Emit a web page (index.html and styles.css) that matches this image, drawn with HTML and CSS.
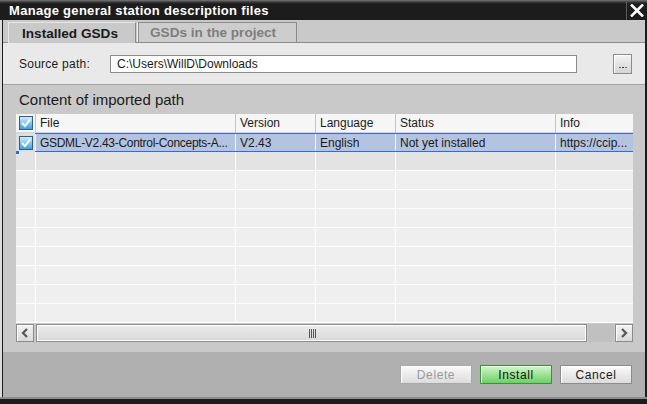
FILE: index.html
```html
<!DOCTYPE html>
<html lang="en">
<head>
<meta charset="utf-8">
<title>Manage general station description files</title>
<link rel="stylesheet" href="styles.css">
</head>
<body>
<div class="window">
  <div class="titlebar">
    <span class="title">Manage general station description files</span>
    <div class="close">
      <svg width="14" height="13" viewBox="0 0 14 13"><path d="M1 0.5 L13 12.5 M13 0.5 L1 12.5" stroke="#fff" stroke-width="2.6"/></svg>
    </div>
  </div>
  <div class="frame">
    <div class="tabs">
      <div class="tab active">Installed GSDs</div>
      <div class="tab inactive">GSDs in the project</div>
    </div>
    <div class="source">
      <span class="label">Source path:</span>
      <div class="input">C:\Users\WillD\Downloads</div>
      <div class="browse"><span class="dot d1"></span><span class="dot d2"></span><span class="dot d3"></span></div>
    </div>
    <div class="content">
      <div class="section-title">Content of imported path</div>
      <div class="grid">
        <div class="row header">
          <div class="cell chk"><svg class="cb" width="14" height="14" viewBox="0 0 14 14"><defs><linearGradient id="g1" x1="0" y1="0" x2="0" y2="1"><stop offset="0" stop-color="#d6f0ff"/><stop offset="1" stop-color="#3b9ddd"/></linearGradient></defs><rect x="0.5" y="0.5" width="13" height="13" fill="url(#g1)" stroke="#2f5f86"/><path d="M3 7 L6 10 L11 3.5" stroke="#fff" stroke-width="2" fill="none"/></svg></div>
          <div class="cell">File</div>
          <div class="cell">Version</div>
          <div class="cell">Language</div>
          <div class="cell">Status</div>
          <div class="cell">Info</div>
        </div>
        <div class="row selected">
          <div class="cell chk"><svg class="cb" width="14" height="14" viewBox="0 0 14 14"><defs><linearGradient id="g2" x1="0" y1="0" x2="0" y2="1"><stop offset="0" stop-color="#d6f0ff"/><stop offset="1" stop-color="#3b9ddd"/></linearGradient></defs><rect x="0.5" y="0.5" width="13" height="13" fill="url(#g2)" stroke="#2f5f86"/><path d="M3 7 L6 10 L11 3.5" stroke="#fff" stroke-width="2" fill="none"/></svg><span class="marker"></span></div>
          <div class="cell narrow">GSDML-V2.43-Control-Concepts-A...</div>
          <div class="cell">V2.43</div>
          <div class="cell">English</div>
          <div class="cell">Not yet installed</div>
          <div class="cell">https://ccip...</div>
        </div>
        <div class="row empty first"><div class="cell chk"></div><div class="cell"></div><div class="cell"></div><div class="cell"></div><div class="cell"></div><div class="cell"></div></div>
        <div class="row empty"><div class="cell chk"></div><div class="cell"></div><div class="cell"></div><div class="cell"></div><div class="cell"></div><div class="cell"></div></div>
        <div class="row empty"><div class="cell chk"></div><div class="cell"></div><div class="cell"></div><div class="cell"></div><div class="cell"></div><div class="cell"></div></div>
        <div class="row empty"><div class="cell chk"></div><div class="cell"></div><div class="cell"></div><div class="cell"></div><div class="cell"></div><div class="cell"></div></div>
        <div class="row empty"><div class="cell chk"></div><div class="cell"></div><div class="cell"></div><div class="cell"></div><div class="cell"></div><div class="cell"></div></div>
        <div class="row empty"><div class="cell chk"></div><div class="cell"></div><div class="cell"></div><div class="cell"></div><div class="cell"></div><div class="cell"></div></div>
        <div class="row empty"><div class="cell chk"></div><div class="cell"></div><div class="cell"></div><div class="cell"></div><div class="cell"></div><div class="cell"></div></div>
        <div class="row empty"><div class="cell chk"></div><div class="cell"></div><div class="cell"></div><div class="cell"></div><div class="cell"></div><div class="cell"></div></div>
        <div class="row empty"><div class="cell chk"></div><div class="cell"></div><div class="cell"></div><div class="cell"></div><div class="cell"></div><div class="cell"></div></div>
      </div>
      <div class="hscroll">
        <div class="sbtn"><svg width="8" height="10" viewBox="0 0 8 10"><path d="M6 1 L2 5 L6 9" stroke="#555" stroke-width="2.2" fill="none"/></svg></div>
        <div class="thumb"><svg width="8" height="9" viewBox="0 0 8 9"><path d="M0.5 0 V9 M2.5 0 V9 M4.5 0 V9 M6.5 0 V9" stroke="#555" stroke-width="1"/></svg></div>
        <div class="track"></div>
        <div class="sbtn"><svg width="8" height="10" viewBox="0 0 8 10"><path d="M2 1 L6 5 L2 9" stroke="#555" stroke-width="2.2" fill="none"/></svg></div>
      </div>
    </div>
    <div class="footer">
      <div class="btn disabled">Delete</div>
      <div class="btn primary">Install</div>
      <div class="btn">Cancel</div>
    </div>
  </div>
  <div class="bottom"></div>
</div>
</body>
</html>
```

FILE: styles.css
```css
html, body {
  margin: 0;
  padding: 0;
  background: #dcdcdc;
}
body {
  width: 647px;
  height: 404px;
  overflow: hidden;
  font-family: "Liberation Sans", Arial, sans-serif;
  font-size: 12px;
  color: #1a1a1a;
}
.window {
  width: 647px;
  height: 404px;
  display: flex;
  flex-direction: column;
}
.titlebar {
  height: 20px;
  flex: none;
  display: flex;
  align-items: center;
  background: linear-gradient(#7a7a7a 0px, #3a3a3a 2px, #1c1c1c 4px, #1c1c1c 100%);
  color: #fff;
}
.title {
  flex: 1;
  padding-left: 9px;
  padding-top: 1px;
  font-weight: bold;
  font-size: 13px;
  letter-spacing: 0.3px;
}
.close {
  width: 20px;
  height: 20px;
  border-left: 1px solid #5c5c5c;
  display: flex;
  align-items: center;
  justify-content: center;
}
.frame {
  flex: 1;
  margin-left: 2px;
  border-left: 1px solid #1c1c1c;
  border-right: 2px solid #1c1c1c;
  display: flex;
  flex-direction: column;
  background: #c9c9c9;
}
.tabs {
  height: 22px;
  flex: none;
  display: flex;
  align-items: flex-end;
  padding-left: 5px;
  border-bottom: 1px solid #8c8c8c;
  background: #c9c9c9;
}
.tab {
  height: 20px;
  box-sizing: border-box;
  display: flex;
  align-items: center;
  font-weight: bold;
  font-size: 13.6px;
}
.tab.active {
  width: 128px;
  padding-left: 13px;
  border-left: 1px solid #e6e6e6;
  border-top: 1px solid #e6e6e6;
  border-right: 1px solid #8c8c8c;
  color: #1a1a1a;
  margin-bottom: -1px;
  height: 21px;
  background: #c9c9c9;
}
.tab.inactive {
  width: 160px;
  margin-left: 1px;
  padding-left: 12px;
  border-left: 1px solid #f2f2f2;
  border-top: 1px solid #8c8c8c;
  border-right: 1px solid #8c8c8c;
  box-shadow: inset 1px 0 0 #8c8c8c;
  color: #7e7e7e;
  background: #cdcdcd;
}
.source {
  height: 41px;
  flex: none;
  display: flex;
  align-items: center;
  background: #e9e9e9;
  border-bottom: 1px solid #a4a4a4;
  padding-left: 16px;
  padding-right: 13px;
}
.label {
  width: 91px;
  font-size: 12px;
  letter-spacing: 0.25px;
  color: #1a1a1a;
}
.input {
  width: 467px;
  height: 18px;
  box-sizing: border-box;
  border: 1px solid #8c8c8c;
  background: #fff;
  padding-left: 6px;
  line-height: 16px;
  font-size: 12px;
}
.browse {
  margin-left: auto;
  width: 19px;
  height: 20px;
  box-sizing: border-box;
  border: 1px solid #8c8c8c;
  box-shadow: inset 1px 1px 0 #fff;
  background: linear-gradient(#f4f4f4, #d4d4d4);
  display: flex;
  align-items: flex-end;
  justify-content: center;
  gap: 1px;
  padding-bottom: 5px;
}
.dot {
  width: 2px;
  height: 1px;
}
.d1 { background: #d03030; }
.d2 { background: #303070; }
.d3 { background: #2e8ad8; }
.content {
  height: 267px;
  flex: none;
  display: flex;
  flex-direction: column;
  padding: 0 12px 0 13px;
  background: #c9c9c9;
}
.section-title {
  height: 29px;
  display: flex;
  align-items: center;
  padding-left: 3px;
  font-size: 15px;
  color: #1a1a1a;
}
.grid {
  display: flex;
  flex-direction: column;
  background: #efefef;
}
.row {
  display: grid;
  grid-template-columns: 19px 200px 80px 80px 160px 1fr;
  height: 19px;
  box-sizing: border-box;
}
.cell {
  padding-left: 5px;
  display: flex;
  align-items: center;
  white-space: nowrap;
  overflow: hidden;
  font-size: 12px;
}
.cell + .cell {
  padding-left: 4px;
}
.cell.narrow {
  letter-spacing: -0.3px;
}
.cell.chk {
  padding-left: 3px;
  position: relative;
  overflow: visible;
}
.header {
  background: #f6f6f6;
  border-bottom: 1px solid #d6d6d6;
}
.header .cell + .cell {
  border-left: 1px solid #c4c4c4;
}
.selected {
  background: #b4c4e0;
  border-top: 1px solid #3a6ac8;
  border-bottom: 1px solid #3a6ac8;
}
.selected .chk {
  background: #dedede;
  margin-top: -1px;
  margin-bottom: -1px;
}
.selected .cell + .cell {
  border-left: 1px solid #f4f4f4;
}
.marker {
  position: absolute;
  left: 0;
  bottom: -2px;
  width: 3px;
  height: 3px;
  background: #3a6ac8;
}
.empty {
  border-bottom: 1px solid #ffffff;
  background: #efefef;
}
.empty.first {
  background: #e3e3e3;
}
.empty .cell + .cell {
  border-left: 1px solid #ffffff;
}
.hscroll {
  margin-top: 1px;
  height: 18px;
  display: flex;
  gap: 1px;
}
.sbtn {
  width: 18px;
  height: 18px;
  box-sizing: border-box;
  border: 1px solid #8c8c8c;
  box-shadow: inset 1px 1px 0 #fff;
  background: linear-gradient(#f2f2f2, #dadada);
  display: flex;
  align-items: center;
  justify-content: center;
}
.thumb {
  width: 551px;
  margin-left: 1px;
  height: 18px;
  box-sizing: border-box;
  border: 1px solid #8c8c8c;
  box-shadow: inset 1px 1px 0 #fff, inset -1px -1px 0 #fff;
  background: linear-gradient(#ececec, #d8d8d8);
  display: flex;
  align-items: center;
  justify-content: center;
  padding-left: 3px;
}
.track {
  flex: 1;
  background: #c0c0c0;
}
.footer {
  flex: 1;
  display: flex;
  align-items: flex-start;
  justify-content: flex-end;
  gap: 8px;
  padding-top: 13px;
  padding-right: 13px;
  background: #b0b0b0;
}
.btn {
  width: 72px;
  height: 19px;
  box-sizing: border-box;
  border: 1px solid #8c8c8c;
  box-shadow: inset 1px 1px 0 #fff;
  background: linear-gradient(#fafafa, #dcdcdc);
  display: flex;
  align-items: center;
  justify-content: center;
  font-size: 12px;
  letter-spacing: 0.6px;
  color: #1a1a1a;
}
.btn.disabled {
  color: #9a9a9a;
  border-color: #a8a8a8;
}
.btn.primary {
  border-color: #3f8f3f;
  box-shadow: inset 1px 1px 0 #e8ffe0;
  background: linear-gradient(#d6f5cf, #9ee396 50%, #6fce68);
  color: #10200f;
}
.bottom {
  height: 7px;
  flex: none;
  background: #1c1c1c;
  border-top: 2px solid #8c8c8c;
  box-sizing: border-box;
}
```
